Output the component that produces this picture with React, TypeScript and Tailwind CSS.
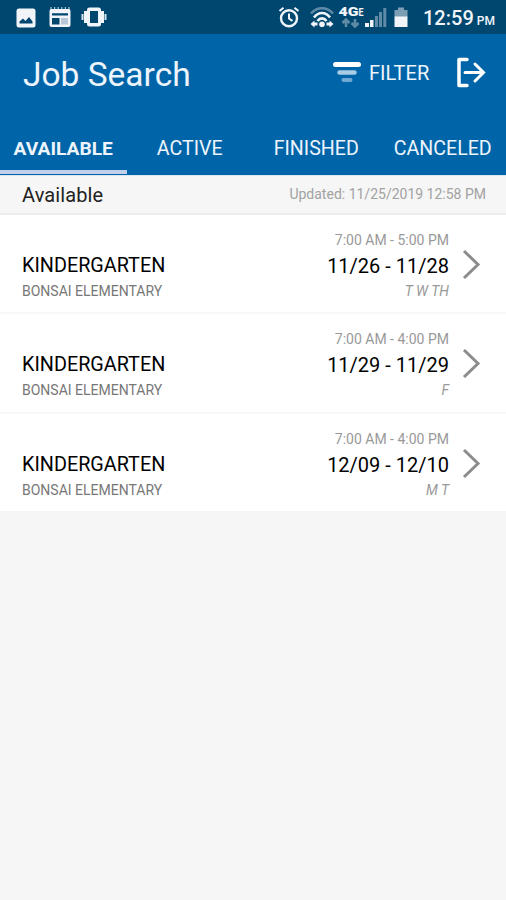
import type { ReactNode } from "react";
import clsx from "clsx";

interface Job {
  title: string;
  school: string;
  time: string;
  dates: string;
  days: string;
}

const tabs = ["AVAILABLE", "ACTIVE", "FINISHED", "CANCELED"];

const jobs: Job[] = [
  {
    title: "KINDERGARTEN",
    school: "BONSAI ELEMENTARY",
    time: "7:00 AM - 5:00 PM",
    dates: "11/26 - 11/28",
    days: "T W TH",
  },
  {
    title: "KINDERGARTEN",
    school: "BONSAI ELEMENTARY",
    time: "7:00 AM - 4:00 PM",
    dates: "11/29 - 11/29",
    days: "F",
  },
  {
    title: "KINDERGARTEN",
    school: "BONSAI ELEMENTARY",
    time: "7:00 AM - 4:00 PM",
    dates: "12/09 - 12/10",
    days: "M T",
  },
];

function Glyph(props: { w: number; h: number; className?: string; children: ReactNode }) {
  return (
    <svg
      width={props.w}
      height={props.h}
      viewBox={`0 0 ${props.w} ${props.h}`}
      fill="none"
      className={clsx("shrink-0", props.className)}
    >
      {props.children}
    </svg>
  );
}

function StatusBar() {
  return (
    <div className="flex h-[34px] items-start bg-[#004770] text-[#f1f5fa]">
      {/* picture */}
      <Glyph w={20} h={20} className="mt-[7.5px] ml-4">
        <rect x="0.5" y="0.5" width="19" height="19" rx="2.5" fill="currentColor" />
        <path d="M3.500 15.500v-2l3.500-3 2.500 2.500 3.500-4 3.500 4.500v2z" fill="#004770" />
      </Glyph>
      {/* news */}
      <Glyph w={22} h={21} className="mt-1.5 ml-[13px]">
        <path d="M2 3.500V1M5.600 3.500V1M9.200 3.500V1M12.800 3.500V1M16.400 3.500V1M20 3.500V1" stroke="currentColor" strokeWidth="1.2" opacity="0.7" />
        <rect x="0.5" y="3" width="21" height="18" rx="2" fill="currentColor" />
        <path d="M3 7.200h16v2.300H3zM3 12h7.500v6.500H3z" fill="#004770" />
        <path d="M12 12h7v6.500h-7z" fill="#b9c8d6" />
      </Glyph>
      {/* vibrate */}
      <Glyph w={26} h={20} className="mt-[7px] ml-2.5">
        <rect x="6" y="0.5" width="14" height="19" rx="2.5" fill="currentColor" />
        <rect x="9" y="4" width="8" height="12" fill="#004770" />
        <path d="M4.500 4v12M21.500 4v12" stroke="currentColor" strokeWidth="3" />
        <path d="M1.500 7v6M24.500 7v6" stroke="currentColor" strokeWidth="2" opacity="0.9" />
      </Glyph>

      {/* alarm */}
      <Glyph w={22} h={22} className="mt-1.5 ml-[171px]">
        <circle cx="11" cy="12.3" r="8" stroke="currentColor" strokeWidth="2.400" />
        <path d="M11 7.500v5l3.500 2.300M1.500 5l4-3.300M20.500 5l-4-3.300" stroke="currentColor" strokeWidth="2" />
      </Glyph>
      {/* wifi */}
      <Glyph w={24} h={22} className="mt-1.5 ml-2.5">
        <path d="M1 7.500C7 0.500 17 0.500 23 7.500" stroke="#5f8ba6" strokeWidth="2.500" />
        <path d="M4 11.500C8.500 5.500 15.500 5.500 20 11.500M7.500 15c2.500-3.500 6.500-3.500 9 0" stroke="currentColor" strokeWidth="2.600" />
        <circle cx="12" cy="18.2" r="2.800" fill="currentColor" />
        <path d="M0.500 18l4-3.500v2h3v3h-3v2zM23.500 18l-4-3.500v2h-3v3h3v2z" fill="currentColor" />
      </Glyph>
      {/* network */}
      <Glyph w={27} h={22} className="mt-1.5 ml-1">
        <text x="0.5" y="9.500" fontSize="12" fontWeight="900" fontFamily="Roboto, sans-serif" textLength="20" lengthAdjust="spacingAndGlyphs" fill="currentColor">
          4G
        </text>
        <text x="20.500" y="9.500" fontSize="11" fontWeight="700" fontFamily="Roboto, sans-serif" textLength="5" lengthAdjust="spacingAndGlyphs" fill="currentColor">
          E
        </text>
        <path d="M8 21v-6M4.500 17l3.500-3.500 3.500 3.500M17 13v6M13.500 17l3.500 3.500 3.500-3.500" stroke="#5f8ba6" strokeWidth="2.600" />
      </Glyph>
      {/* signal */}
      <Glyph w={22} h={21} className="mt-[7px]">
        <path d="M0 16h4v4H0zM5 13h3.500v7H5z" fill="currentColor" />
        <path d="M10 9h3v11h-3zM14 5h3v15h-3zM18.300 1h3v19h-3z" fill="#5f8ba6" />
      </Glyph>
      {/* battery */}
      <Glyph w={14} h={20} className="mt-[7px] ml-[7px]">
        <path d="M4 0.500h6V3h3.500v7H0.500V3H4z" fill="#7d9fb5" />
        <path d="M0.500 9.500h13V20H0.500z" fill="currentColor" />
      </Glyph>
      <div className="mt-1.5 ml-[15px] flex items-baseline leading-[24px] font-medium whitespace-nowrap">
        <span className="text-[20px]">12:59</span>
        <span className="ml-[3px] text-[12px]">PM</span>
      </div>
    </div>
  );
}

function Header() {
  return (
    <header className="h-[142px] border-b border-[#dce7f3] bg-[#0065a8] text-[#eef4fc]">
      <div className="flex h-[89px] items-start">
        <h1 className="mt-[21px] ml-[23px] w-[309px] text-[33.5px] leading-[40px]">Job Search</h1>
        <Glyph w={30} h={22} className="mt-[27px]">
          <path d="M3.500 3.500h23" stroke="#fff" strokeWidth="5" strokeLinecap="round" />
          <path d="M7.500 11.500h15" stroke="#a9cbe6" strokeWidth="4.500" strokeLinecap="round" />
          <path d="M11.500 19h7" stroke="#6fa8d2" strokeWidth="4" strokeLinecap="round" />
        </Glyph>
        <span className="mt-[27px] ml-[7px] w-[62px] text-[20px] leading-[24px]">FILTER</span>
        <Glyph w={32} h={32} className="mt-[23px] ml-6">
          <path d="M12 2.500H4v26h8" stroke="#fff" strokeWidth="3.500" strokeLinecap="round" strokeLinejoin="round" />
          <path d="M10 15.500h18M20 7l8.500 8.500L20 24" stroke="#fff" strokeWidth="3" strokeLinecap="round" />
        </Glyph>
      </div>
      <nav className="grid h-[51px] grid-cols-4">
        {tabs.map((tab, i) => (
          <div
            key={tab}
            className={clsx(
              "flex justify-center border-b-4 pt-[14px] leading-[24px]",
              i === 0
                ? "border-[#c3d0ea] text-[19.2px] font-bold"
                : "border-transparent text-[19.6px]",
            )}
          >
            {tab}
          </div>
        ))}
      </nav>
    </header>
  );
}

function JobRow({ job }: { job: Job }) {
  return (
    <li className="flex h-[99.3px] items-start justify-between border-b-2 border-[#f8f8f8] bg-white pl-[22px] last:h-[97.400px] last:border-b-0">
      <div className="pt-[39px]">
        <div className="text-[19.8px] leading-[24px] text-black">{job.title}</div>
        <div className="mt-[3px] text-[14px] leading-[20px] text-[#777]">{job.school}</div>
      </div>
      <div className="flex">
        <div className="pt-[15px] text-right">
          <div className="text-[14px] leading-[20px] text-[#999]">{job.time}</div>
          <div className="mt-1 text-[20px] leading-[24px] text-black">{job.dates}</div>
          <div className="mt-[3px] text-[14px] leading-[20px] text-[#999] italic">{job.days}</div>
        </div>
        <Glyph w={20} h={32} className="mt-[34px] mr-[25px] ml-3">
          <path d="M3 2L17 15.500 3 29" stroke="#8c8c8c" strokeWidth="3" />
        </Glyph>
      </div>
    </li>
  );
}

export default function App() {
  return (
    <div className="h-[900px] w-[506px] overflow-hidden bg-[#f6f6f6] font-['Roboto',sans-serif]">
      <StatusBar />
      <Header />
      <div className="flex h-[39px] justify-between border-b-2 border-[#ececec] bg-[#f6f6f6] pr-5 pl-[22px]">
        <span className="pt-[7px] text-[20px] leading-[24px] tracking-[0.1px] text-[#222]">Available</span>
        <span className="pt-[8px] text-[14px] leading-[20px] text-[#a2a2a2]">
          Updated: 11/25/2019 12:58 PM
        </span>
      </div>
      <ul>
        {jobs.map((job) => (
          <JobRow key={job.dates} job={job} />
        ))}
      </ul>
    </div>
  );
}
